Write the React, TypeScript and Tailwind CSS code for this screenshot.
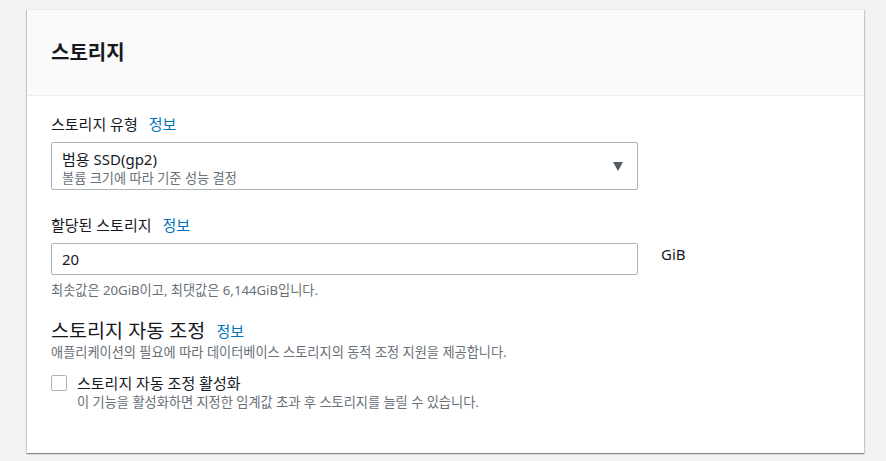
import React from "react";

const font = { fontFamily: '"Noto Sans", "Noto Sans CJK KR", sans-serif' };

const InfoLink = () => (
  <a className="ml-[11px] text-[15px] text-[#0073bb] cursor-pointer">정보</a>
);

export default function App() {
  return (
    <div
      className="min-h-[461px] bg-[#f2f3f3] pt-[9px] pl-[27px] pr-[22px] text-[#16191f]"
      style={font}
    >
      <div className="bg-white shadow-[0_1px_1px_0_rgba(0,28,36,0.3),1px_1px_1px_0_rgba(0,28,36,0.15),-1px_1px_1px_0_rgba(0,28,36,0.15)] border-t border-[#eaeded]">
        {/* header */}
        <div className="h-[86px] bg-[#fafafa] border-b border-[#eaeded] px-[24px] flex items-center">
          <h2 className="text-[20px] font-bold leading-[24px]">스토리지</h2>
        </div>

        <div className="px-[24px] pt-[17px] pb-[42px]">
          {/* storage type */}
          <div className="w-[587px]">
            <div className="text-[15px] leading-[22px] flex items-center">
              스토리지 유형
              <InfoLink />
            </div>
            <div className="mt-[7px] h-[48px] border border-[#aab7b8] rounded-[2px] pl-[10px] pr-[14px] flex justify-between">
              <div className="pt-[6px]">
                <div className="text-[15px] leading-[20px]">범용 SSD(gp2)</div>
                <div className="text-[13.2px] leading-[18px] text-[#687078]">
                  볼륨 크기에 따라 기준 성능 결정
                </div>
              </div>
              <svg className="self-center" width="10" height="9" viewBox="0 0 10 9">
                <path d="M0 0h10L5 9z" fill="#545b64" />
              </svg>
            </div>
          </div>

          {/* allocated storage */}
          <div className="mt-[24px]">
            <div className="text-[15px] leading-[22px] flex items-center">
              할당된 스토리지
              <InfoLink />
            </div>
            <div className="mt-[7px] flex gap-[23px]">
              <div className="w-[587px]">
                <div className="h-[32px] border border-[#aab7b8] rounded-[2px] px-[10px] flex items-center text-[15px]">
                  20
                </div>
                <div className="mt-[6px] text-[13.2px] leading-[18px] text-[#687078]">
                  최솟값은 20GiB이고, 최댓값은 6,144GiB입니다.
                </div>
              </div>
              <div className="text-[15px] leading-[22px]">GiB</div>
            </div>
          </div>

          {/* autoscaling */}
          <div className="mt-[20px]">
            <div className="flex items-center leading-[24px]">
              <span className="text-[19.6px]">스토리지 자동 조정</span>
              <InfoLink />
            </div>
            <div className="text-[13.2px] leading-[18px] text-[#687078]">
              애플리케이션의 필요에 따라 데이터베이스 스토리지의 동적 조정 지원을 제공합니다.
            </div>
            <div className="mt-[12px] flex">
              <div className="mt-[2px] w-[16px] h-[16px] border border-[#aab7b8] rounded-[2px] bg-white shrink-0" />
              <div className="ml-[10px]">
                <div className="text-[15px] leading-[20px]">스토리지 자동 조정 활성화</div>
                <div className="text-[13.2px] leading-[18px] text-[#687078]">
                  이 기능을 활성화하면 지정한 임계값 초과 후 스토리지를 늘릴 수 있습니다.
                </div>
              </div>
            </div>
          </div>
        </div>
      </div>
    </div>
  );
}
